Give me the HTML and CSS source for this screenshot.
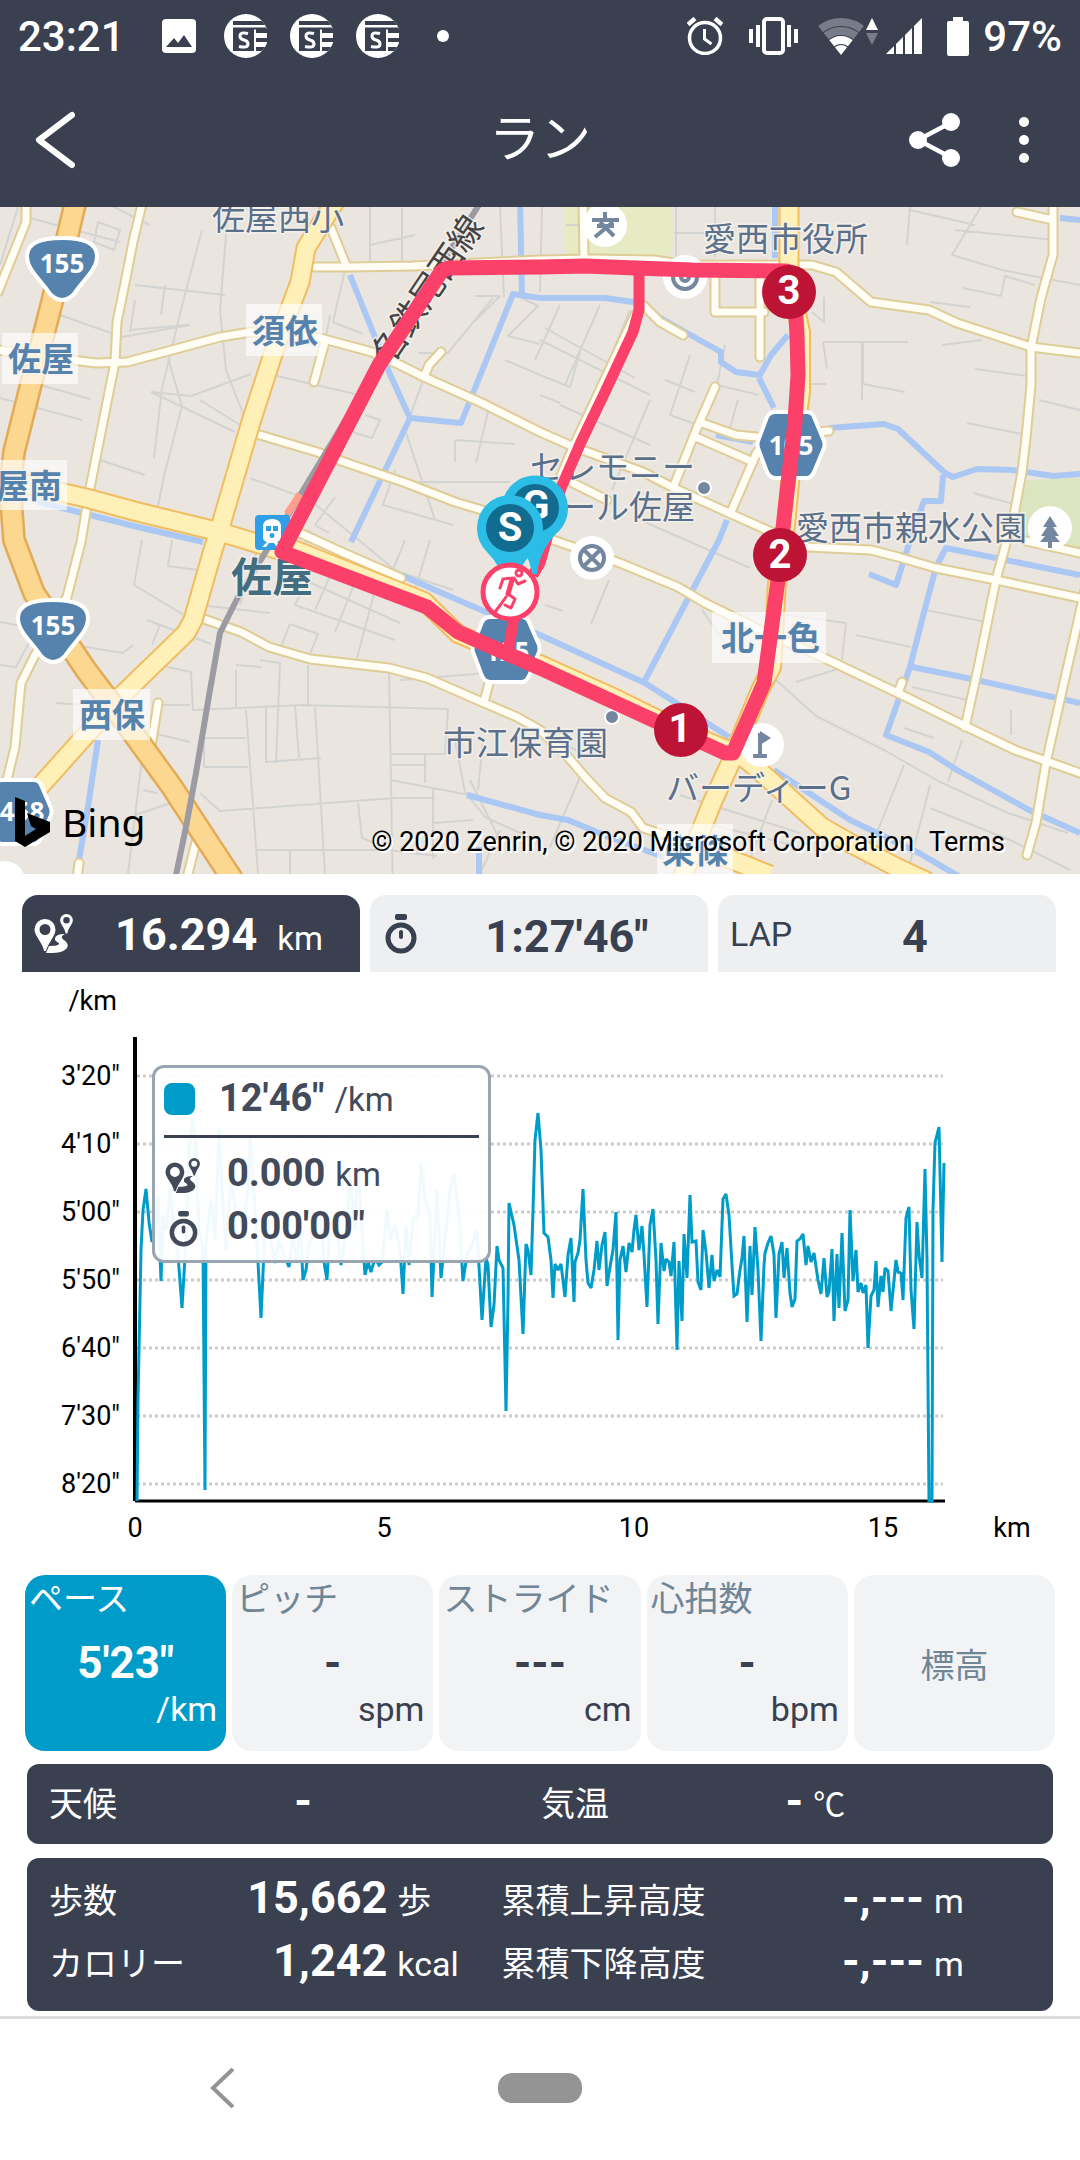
FILE: index.html
```
<!DOCTYPE html>
<html lang="ja">
<head>
<meta charset="utf-8">
<meta name="viewport" content="width=device-width, initial-scale=1">
<title>ラン</title>
<link rel="stylesheet" href="styles.css">
</head>
<body>
<svg class="defs" aria-hidden="true">
  <defs>
    <symbol id="i-route" viewBox="0 0 40 40">
      <path fill="currentColor" fill-rule="evenodd" d="M11 5a10.500 10.500 0 0 1 10.500 10.500C21.500 22 14 29 12 37h-2C9 29 .5 22 .5 15.500A10.500 10.500 0 0 1 11 5zm0 5a5.500 5.500 0 1 0 0 11 5.500 5.500 0 0 0 0-11z"/>
      <path fill="currentColor" fill-rule="evenodd" d="M32.500 0a6.300 6.300 0 0 1 6.300 6.300c0 4-4.300 7-5.500 13.200h-1.600C30.500 13.300 26.200 10.300 26.200 6.300A6.300 6.300 0 0 1 32.500 0zm0 3a3.300 3.300 0 1 0 0 6.600 3.300 3.300 0 0 0 0-6.600z"/>
      <path fill="currentColor" d="M12 39l3-7c6 0 10-1 10-2 0-2-4-2-4-5 0-4 5-5 10-5-4 2-4 4-1 6 4 3 5 6 2 9-4 4-10 4-20 4z"/>
    </symbol>
    <symbol id="i-watch" viewBox="0 0 32 40">
      <rect x="10" y="0" width="12" height="6" rx="2" fill="currentColor"/>
      <circle cx="16" cy="24" r="13" fill="none" stroke="currentColor" stroke-width="5"/>
      <rect x="14" y="16" width="4" height="9" rx="2" fill="currentColor"/>
    </symbol>
    <symbol id="i-news" viewBox="0 0 43 44">
      <clipPath id="disc"><circle cx="22" cy="22" r="22"/></clipPath>
      <g clip-path="url(#disc)">
        <rect width="44" height="44" fill="#fff"/>
        <path fill="#3a4050" d="M9 7h34v4H9zM32 15h12v4H32zM32 24h12v4H32zM32 33h12v4H32z"/>
        <path fill="none" stroke="#3a4050" stroke-width="2" d="M9 14.500h34"/>
        <rect x="9" y="15" width="21" height="22" fill="#3a4050"/>
      </g>
      <path fill="none" stroke="#fff" stroke-width="3" d="M24 19.500q-8-2-8 2.500 0 3 4 4t4 4q0 4.500-9 2.500"/>
    </symbol>
  </defs>
</svg>

<header class="head">
  <div class="status">
    <span class="clock">23:21</span>
    <svg class="s-photo" viewBox="0 0 34 34"><rect width="34" height="34" rx="4" fill="#fff"/><path fill="#3a4050" d="M4 28l8-9 4 5 6-8 8 12z"/></svg>
    <svg class="s-news"><use href="#i-news"/></svg>
    <svg class="s-news"><use href="#i-news"/></svg>
    <svg class="s-news"><use href="#i-news"/></svg>
    <i class="s-dot"></i>
    <div class="status-right">
      <svg class="s-alarm" viewBox="0 0 36 38" fill="none" stroke="#fff"><circle cx="18" cy="21" r="15.500" stroke-width="3.500"/><path stroke-width="3" d="M17.500 12v10l7 5"/><path stroke-width="4.500" d="M1 7.500l7-6M35 7.500l-7-6"/></svg>
      <svg class="s-vibe" viewBox="0 0 49 38"><rect x="15" y="2" width="19" height="34" rx="3" fill="none" stroke="#fff" stroke-width="4"/><path fill="#fff" d="M0 12h4v14H0zM7 8h4v22H7zM38 8h4v22h-4zM45 12h4v14h-4z"/></svg>
      <svg class="s-wifi" viewBox="0 0 60 38">
        <clipPath id="fan"><path d="M-3 5L23 38 49 5V-2H-3z"/></clipPath>
        <g clip-path="url(#fan)" fill="none"><circle cx="23" cy="38" r="33" stroke="#777c88" stroke-width="8"/><circle cx="23" cy="38" r="24" stroke="#777c88" stroke-width="8"/><circle cx="23" cy="38" r="15" stroke="#fff" stroke-width="8"/><circle cx="23" cy="38" r="10" fill="#fff"/></g>
        <path fill="#fff" d="M48 13l6-12 6 12z"/><path fill="#777c88" d="M48 16h12l-6 12z"/>
      </svg>
      <svg class="s-signal" viewBox="0 0 36 36"><path fill="#fff" d="M0 36L8 28v8zM10 36V26l7-7v17zM19 36V17l7-7v26zM28 36V8l8-8v36z"/></svg>
      <svg class="s-battery" viewBox="0 0 22 39"><path fill="#fff" d="M6 0h10v4h4q2 0 2 2v31q0 2-2 2H2q-2 0-2-2V6q0-2 2-2h4z"/></svg>
      <span class="percent">97%</span>
    </div>
  </div>
  <nav class="bar">
    <button class="icon-btn" aria-label="戻る"><svg class="b-back" viewBox="0 0 40 58"><path d="M37 4L4 29l33 25" fill="none" stroke="#fff" stroke-width="6" stroke-linecap="round" stroke-linejoin="round"/></svg></button>
    <h1>ラン</h1>
    <div class="bar-right">
      <button class="icon-btn" aria-label="共有"><svg class="b-share" viewBox="0 0 52 54"><path d="M43 9L9 27l34 18" fill="none" stroke="#fff" stroke-width="4.500"/><g fill="#fff"><circle cx="9" cy="27" r="9"/><circle cx="42" cy="9" r="9"/><circle cx="42" cy="45" r="9"/></g></svg></button>
      <button class="icon-btn" aria-label="メニュー"><svg class="b-more" viewBox="0 0 10 46" fill="#fff"><circle cx="5" cy="5" r="5"/><circle cx="5" cy="23" r="5"/><circle cx="5" cy="41" r="5"/></svg></button>
    </div>
  </nav>
</header>

<main>
<section class="map" aria-label="ルート地図">
<svg class="map-svg" viewBox="0 207 1080 667">
  <defs>
    <g id="lanes">
      <path d="M26 200v22L-2 292M143 200l-10 42-7 36-9 44-2 40-10 50-15 76-9 54-14 55-33 60-13 26-6 64-8 33"/>
      <path d="M-3 350l75 10 24 3 31-1 45-12 48-13 31-5 69 6 52 14 28 13 24 12 58 26 58 29 34 15 69 25 31 16 55 25 38 17 41 17 63 3 27 7 38 11 60 12 84 18"/>
      <path d="M325 342l-11 40M441 352l-12 13-5 12M331 228l15 37"/>
      <path d="M315 267h31l67-1 127-6 52-1 62 1 34 5h124l24 7 35 30 58 8 28 13 74 24 49 6"/>
      <path d="M260 435l57 17 27 10 62 21 49 19 27 8 71 30 67 23 58 24 27 16 55 27 62 27 80 38 65 32 48 23 65 23"/>
      <path d="M300 533l44 20 57 25M583 200l1 58M643 305l17 17 23 13M715 278v34h49M760 278v79M715 387l-18 41-24 60M702 423l34 12 21 2M698 438l55 24M757 452l-26 60M815 432l14-1"/>
      <path d="M635 315l-61 130-14 33M573 483l34 17"/>
      <path d="M1017 212l36 8M1053 200v55l-12 43-10 50v37l-5 53-4 34-8 43-9 32-9 33-19 93-12 54M1085 590l-22 97-17 76-10 60-9 32M902 682l-4 11M1026 541l54 12"/>
      <path d="M201 618l40 14 28 15 41 12 79 9 38 10 55 24 35 15 23 13 28 27 17 20 20 21 26 14 12 16 28 9M489 683l-5 19M158 703l-8 50M79 863l-2 16M196 842l-9 36"/>
    </g>
    <g id="mains">
      <path d="M336 200l-30 48-6 34-25 66-24 74-31 106-7 22-20 70-7 13-66 64-86 96-38 42"/>
      <path d="M20 483l66 15 52 14 82 20 59 18"/>
      <path d="M726 747l21 13 34 30 41 37 28 16 48 25 30 14M789 200v75M735 753l-23 50-32 80M715 853l55 22"/>
    </g>
    <g id="mids">
      <path d="M279 547l17 3 128 51 34 33 52 22 30 8 69 31 69 34 48 20"/>
      <path d="M794 300l7 32v60l-8 60-7 73-9 58-5 84-12 23-27 65"/>
    </g>
  </defs>
  <rect y="207" width="1080" height="667" fill="#eae5df"/>
  <path fill="#e6ebc3" d="M563 207h107q8 28-1 52H565z"/>
  <path fill="#dbe5c0" d="M1027 480l53-2v74l-75-22z"/>
  <g class="streets">
    <path d="M30 218l90 24M110 205l40 20M98 222l-4 20 20 8 6-20zM0 265l18-58M202 230l-18 68-22 90-8 70M228 210l-8 100 6 60 18 46v40M135 285l90 10M165 285l-4 30M135 300l-5 32M60 315l62 22 68-12M40 385l50 14M130 330l58-5M0 398l82 22M168 358l14 48-18 70-8 40M151 392l40 4 60-22M151 392l84 40M260 372l95 22M330 315l-10 55M370 205v56M402 208v56M345 270l-12 52 30 12M100 460l45 15M370 245l45-10M400 205l80-8M200 400l40 25"/>
    <path d="M500 207l4 90M542 207l-2 85M475 296h25l-25 25M513 294l25 12-30 30 32 8M505 360l35 15M418 353h30l45-55M365 415l15 5-8 18-20-6M425 375l-20 55 30 90M490 403l-14 60M455 440l60 4M455 440v22M250 478l60 22 85 70M310 530l-10 35M395 470l-12 35 70 20M400 482h110M335 497l-20 28 14 8"/>
    <path d="M676 207v55M715 207v50M580 225h-14M674 233h35M910 205l-3 40M910 210l65 15M982 205l-30 50 50 15 78 15M955 230l100 10M963 288l38 8 4-20 30 9M930 302l40 5M862 400v-58M823 342h85M863 342v42l42 8M823 342l4 27M975 369l52 7M967 423l60 12M1039 400l41 10M973 493l44 12M812 312l12 10v-25M942 345l40-5M801 384h25"/>
    <path d="M545 328l90 50M560 305l-25 55M600 305l-35 80M540 340l110 55M630 310l-45 110M540 375l30 12 10-35M690 355l-20 60 55 20M560 405l90 40M725 345l-8 40 42 10M738 400l-8 28 18 8M540 395l20 8M665 380l30 12M650 400l-38 90M640 520l110 48M750 452l30 15M545 605l18 6M609 580l-18 44M702 610l28 40M780 614l66 9-5 45-45 14M856 635l55 12M926 610l60 12M776 680l40 36 70 35 52 30 70 32 60 20M904 765l-40 100M930 785l-20 78M962 740l-14 42M912 687l55 13M904 728l30 10M930 808l80 32 60 30M680 795l120 38M772 800l-26 70M712 825l80 20M1011 710v25"/>
    <path d="M172 540l-4 26 30 4M142 540l-8 45 50 30M147 620l64 24M160 625l-8 20M75 645l48 8 10-8M0 622l26 5M0 665l16 2 14-26M260 540l-20 65M200 605l70 8M315 565l-20 40 100 35M335 565l-20 45M355 582l-20 50M375 590l-18 68M300 578l100 45M405 540l-12 30 60 20M430 540l-15 50M260 660l20 3-4 100M236 665l25 2M236 670v37M308 665v42M389 668l4 230M290 624l-10 25M290 624l28 10-10 25M193 710l110-5 145 4-3 45h-55M190 705h-35M56 703l45 3M167 667l24 5 2 39M204 738h42M204 767h44M204 738v29M246 710l12 164M266 705v57l55-4M295 705l4 53M315 707l10 167M200 793l20 18 175-13h40M143 790l14 3M135 815l60-20M140 730l50 12M144 742l-16 132M257 850h130l50 6M290 850v24M358 803l4 35 25 10M390 780l80 15M433 787v72M470 780l30 60M425 753v30M455 740l10 52 20 25 55 25M483 740l-5 50M390 765h37M433 823l40-3M400 680l100-8M500 830l-20 44M556 740l20 10M580 777l-30 70"/>
  </g>
  <g class="water">
    <path d="M520 200l2 95M540 298l-27-4-52 129-51-5-59 124M410 418l-21-46-39-97M540 298h65l28 4 45 26 43 24v10l15 10 24 3 11-20 17-20M759 378l15 30M775 200v58"/>
    <path d="M829 428l55-4 14 5 47 44 8 4 24-8 35 1 41 6 27-2M943 475l-2 26h-17l-16 46-12 38-27-11M1080 575l-134-27-10 19-14 53-12 47-14 40-10 28 43 17 28 18 72 40 51 23M912 667l55 11 113 25"/>
    <path d="M401 575l57 25 82 35 105 48 84 54M645 680l74-140 8-20M774 770l76 50 69 33 41 24M467 795l73 20 28 5 41 17 55 20M479 847v27M98 740l-10 67-9 53M38 502l100 25 65 15M1060 218l20 2M716 435l37 7"/>
  </g>
  <use href="#lanes" class="lane-edge"/><use href="#lanes" class="lane"/>
  <use href="#mids" class="mid-edge"/><use href="#mids" class="mid"/>
  <use href="#mains" class="main-edge"/><use href="#mains" class="main-road"/>
  <path class="hwy-edge" d="M76 200L52 302 29 392 14 452 10 488l4 52 20 53 52 77 28 37 58 80 28 43 33 50"/>
  <path class="hwy" d="M76 200L52 302 29 392 14 452 10 488l4 52 20 53 52 77 28 37 58 80 28 43 33 50"/>
  <path class="rail" d="M482 200l-93 148-93 154-31 51-27 44-18 36-10 57-14 83-10 54-11 53"/>
  <path d="M300 494l-13 20" stroke="#ff9e8a" stroke-width="7"/>

  <g fill="#fff" fill-opacity=".65"><rect x="246" y="304" width="76" height="52"/><rect x="2" y="333" width="76" height="51"/><rect x="-8" y="460" width="75" height="50"/><rect x="73" y="689" width="77" height="51"/><rect x="712" y="612" width="114" height="51"/><rect x="657" y="824" width="76" height="50"/></g>
  <g class="town"><text x="252" y="343">須依</text><text x="8" y="371">佐屋</text><text x="-4" y="498">屋南</text><text x="79" y="727">西保</text><text x="721" y="650">北一色</text><text x="662" y="863">東條</text></g>
  <text class="station" x="231" y="592">佐屋</text>
  <text class="line-name" transform="translate(390 367) rotate(-56)">名鉄尾西線</text>

  <g><rect x="255" y="515" width="35" height="35" rx="4" fill="#2f9fe9"/><path fill="#fff" fill-rule="evenodd" d="M272 519q9 0 9 8v10q0 4-4 5l4 5h-4l-3-4h-5l-3 4h-4l5-5q-4-1-4-5v-10q0-8 9-8zm-6 7v5h5v-5zm7 0v5h5v-5zm-1 7a2.500 2.500 0 1 0 0 5 2.500 2.500 0 0 0 0-5z"/></g>
  <g fill="#fff"><circle cx="605" cy="225" r="22"/><circle cx="685" cy="277" r="22"/><circle cx="1050" cy="528" r="22"/><circle cx="592" cy="558" r="22"/><circle cx="762" cy="745" r="22"/><circle cx="5" cy="881" r="20"/></g>
  <g class="glyph"><path d="M592 220h27M597 226h17M605 212v10M600 222l14 14M613 222l-18 15"/><circle cx="685" cy="277" r="12"/><circle cx="685" cy="277" r="4"/><circle cx="592" cy="558" r="12"/><path d="M584 550l16 16M600 550l-16 16M753 756h14M760 756v-23"/></g>
  <path fill="#7587a0" d="M760 731l11 7-11 7zM1050 516l7 11h-4l6 9h-4l5 6h-8v6h-4v-6h-8l5-6h-4l6-9h-4z"/>
  <circle class="spot" cx="704" cy="488" r="7"/><circle class="spot" cx="612" cy="717" r="7"/>
  <g class="poi"><text x="212" y="230">佐屋西小</text><text x="703" y="251">愛西市役所</text><text x="530" y="479">セレモニー</text><text x="563" y="519">ール佐屋</text><text x="796" y="540">愛西市親水公園</text><text x="443" y="755">市江保育園</text><text x="666" y="800">バーディーG</text></g>

  <g class="shield">
    <path d="M62 238c24 0 35 6 35 18 0 14-14 24-23 38q-12 12-24 0c-9-14-23-24-23-38 0-12 11-18 35-18z"/>
    <path d="M53 600c24 0 35 6 35 18 0 14-14 24-23 38q-12 12-24 0c-9-14-23-24-23-38 0-12 11-18 35-18z"/>
    <path d="M775 412h32q5 0 7 5l10 24q1 4 0 7l-10 24q-3 6-7 6h-32q-5 0-8-6l-9-24q-1-3 0-7l9-24q3-5 8-5z"/>
    <path d="M490 617h32q5 0 7 5l10 23q1 4 0 7l-10 24q-3 6-7 6h-32q-5 0-8-6l-9-24q-1-3 0-7l9-23q3-5 8-5z"/>
    <path d="M2 780h32q5 0 7 5l10 23q1 4 0 7l-10 23q-3 6-7 6H2q-5 0-8-6l-9-23q-1-3 0-7l9-23q3-5 8-5z"/>
    <text x="62" y="273">155</text><text x="53" y="635">155</text><text x="791" y="455">105</text><text x="507" y="661">125</text><text x="22" y="821">458</text>
  </g>

  <path class="run" d="M282 552l97-187 62-93q3-3 9-4l90-1 45-1 51 2 56 2 93 1q8 0 9 10l3 54 1 40-3 47-12 106-5 52-14 103-31 70h-8L605 698l-65-30-30-13-52-23-31-25z"/>
  <path class="run branch" d="M639 270v40l-6 22-28 60-24 50-20 46-21 75-7 12M515 610l-2 13-5 30"/>

  <path fill="#2cbde6" d="M502 508a33 33 0 1 1 58 22q-20 18-23 44h-5q-4-25-22-44z"/>
  <circle cx="535" cy="508" r="24" fill="#116c90"/><text class="pin" x="536" y="519">G</text>
  <path fill="#2cbde6" d="M477 528a33 33 0 1 1 66 0q0 14-10 24-16 16-20 38h-6q-4-22-20-38-10-10-10-24z"/>
  <circle cx="510" cy="528" r="24" fill="#116c90"/><text class="pin" x="510" y="541">S</text>
  <circle cx="510" cy="592" r="27" fill="#fff" stroke="#fb4169" stroke-width="5"/>
  <g fill="none" stroke="#fb4169" stroke-width="3" stroke-linecap="round" stroke-linejoin="round"><circle cx="519" cy="573" r="3"/><path stroke-width="5" d="M512 580l-4 14"/><path d="M500 588l3-9 11-1 4 6 7-3M508 594l7 5-4 9-6-3M506 597l-5 7-6 8"/></g>
  <g fill="#bd1436"><circle cx="789" cy="292" r="27"/><circle cx="780" cy="555" r="27"/><circle cx="681" cy="730" r="27"/></g>
  <g class="pin"><text x="789" y="304">3</text><text x="780" y="568">2</text><text x="680" y="742">1</text></g>
  <path d="M15 797l10 4v35l11-7-5-3-4-13 23 9v10l-25 15-10-6z"/>
  <text class="bing" x="62" y="837">Bing</text>
</svg>
<p class="credit">© 2020 Zenrin, © 2020 Microsoft Corporation<a href="#terms">Terms</a></p>
</section>

<div class="tabs" role="tablist">
  <button class="tab on" role="tab" aria-selected="true"><svg class="t-route"><use href="#i-route"/></svg><span class="t-val">16.294<small>km</small></span></button>
  <button class="tab" role="tab" aria-selected="false"><svg class="t-watch"><use href="#i-watch"/></svg><span class="t-val">1:27'46"</span></button>
  <button class="tab" role="tab" aria-selected="false"><span class="t-lap">LAP</span><span class="t-val">4</span></button>
</div>

<section class="chart" aria-label="ペースのグラフ">
<svg class="chart-svg" viewBox="0 972 1080 603">
  <path class="grid" d="M137 1076h806M137 1144h806M137 1212h806M137 1280h806M137 1348h806M137 1416h806M137 1484h806"/>
  <path d="M135 1501h810" stroke="#000" stroke-width="3"/>
  <path d="M135 1037v464" stroke="#000" stroke-width="4"/>
  <polyline class="pace" points="137,1501 138,1400 141,1250 143,1210 146,1189 149,1222 152,1242 155,1235 158,1195 161,1281 163,1215 166,1230 170,1190 174,1225 178,1255 182,1308 186,1240 189,1150 193,1118 196,1150 199,1230 203,1250 205,1490 206,1240 211,1200 215,1240 219,1128 222,1190 226,1250 231,1180 236,1210 243,1225 248,1190 250,1135 254,1195 258,1262 261,1318 264,1250 266,1215 270,1235 275,1263 279,1240 284,1255 289,1267 293,1235 297,1262 300,1220 303,1280 306,1270 309,1245 315,1225 320,1210 324,1262 327,1280 330,1225 336,1220 341,1265 347,1225 350,1175 355,1230 358,1165 361,1215 365,1275 368,1262 371,1272 375,1258 379,1265 382,1262 387,1210 390,1240 395,1225 400,1250 403,1294 406,1225 409,1265 413,1220 418,1215 421,1162 425,1200 430,1215 432,1297 437,1190 441,1278 446,1230 450,1190 454,1174 459,1215 463,1281 467,1255 472,1245 477,1230 482,1320 486,1258 488,1265 491,1327 494,1305 497,1246 499,1260 503,1268 506,1411 508,1300 509,1203 514,1225 519,1260 523,1334 526,1244 528,1250 531,1275 533,1210 535,1140 538,1113 541,1150 544,1233 548,1237 551,1260 553,1298 555,1264 558,1270 561,1264 565,1297 568,1255 571,1238 574,1302 575,1262 578,1253 580,1240 583,1189 586,1260 588,1283 591,1288 594,1270 597,1241 599,1270 602,1245 605,1232 607,1286 610,1267 613,1250 616,1212 618,1340 620,1260 623,1246 626,1272 629,1243 632,1252 634,1230 636,1215 639,1250 642,1226 644,1255 647,1307 650,1225 653,1209 656,1260 658,1324 661,1243 664,1271 666,1259 669,1262 671,1276 674,1242 677,1350 679,1261 682,1321 684,1234 687,1278 690,1195 692,1242 696,1241 698,1282 701,1290 703,1230 706,1252 709,1288 712,1255 714,1281 717,1270 720,1277 723,1199 726,1194 729,1215 732,1265 734,1296 737,1294 740,1270 742,1258 744,1236 747,1322 750,1246 752,1295 755,1227 758,1270 761,1341 764,1265 765,1253 768,1243 771,1236 774,1255 776,1318 779,1254 782,1242 784,1278 787,1248 790,1293 792,1307 795,1299 797,1241 800,1239 803,1234 806,1265 808,1246 811,1262 814,1253 818,1280 821,1294 824,1258 827,1297 829,1292 832,1249 834,1321 837,1254 839,1308 842,1233 845,1311 848,1300 850,1210 853,1281 856,1250 858,1292 861,1283 863,1293 866,1285 868,1348 871,1296 874,1290 876,1261 878,1307 881,1276 883,1292 885,1268 888,1271 891,1311 896,1260 898,1272 901,1273 903,1300 906,1218 909,1207 911,1290 914,1329 917,1222 919,1255 922,1278 925,1169 927,1260 929,1501 932,1501 933,1210 935,1143 939,1127 942,1262 944,1163"/>
  <g class="axis end"><text x="117" y="1010">/km</text><text x="120" y="1085">3'20"</text><text x="120" y="1153">4'10"</text><text x="120" y="1221">5'00"</text><text x="120" y="1289">5'50"</text><text x="120" y="1357">6'40"</text><text x="120" y="1425">7'30"</text><text x="120" y="1493">8'20"</text></g>
  <g class="axis mid-anchor"><text x="135" y="1537">0</text><text x="384" y="1537">5</text><text x="634" y="1537">10</text><text x="883" y="1537">15</text><text x="1012" y="1537">km</text></g>
</svg>
<div class="tip">
  <div class="tip-head"><i></i><b>12'46"</b><span>/km</span></div>
  <div class="tip-row"><svg class="r"><use href="#i-route"/></svg><b>0.000</b><span>km</span></div>
  <div class="tip-row"><svg class="w"><use href="#i-watch"/></svg><b>0:00'00"</b></div>
</div>
</section>

<div class="cards">
  <button class="card on"><span class="c-name">ペース</span><span class="c-val">5'23"</span><span class="c-unit">/km</span></button>
  <button class="card"><span class="c-name">ピッチ</span><span class="c-val">-</span><span class="c-unit">spm</span></button>
  <button class="card"><span class="c-name">ストライド</span><span class="c-val">---</span><span class="c-unit">cm</span></button>
  <button class="card"><span class="c-name">心拍数</span><span class="c-val">-</span><span class="c-unit">bpm</span></button>
  <button class="card solo"><span class="c-name">標高</span></button>
</div>

<div class="panel weather"><span>天候</span><b>-</b><span>気温</span><div><b>-</b><span>℃</span></div></div>
<div class="panel totals">
  <span>歩数</span><b>15,662</b><em>歩</em><span>累積上昇高度</span><b>-,---</b><em>m</em>
  <span>カロリー</span><b>1,242</b><em>kcal</em><span>累積下降高度</span><b>-,---</b><em>m</em>
</div>
</main>

<footer class="nav">
  <button class="icon-btn" aria-label="戻る"><svg class="n-back" viewBox="0 0 25 42"><path d="M23 2L3 21l20 19" fill="none" stroke="#949494" stroke-width="4"/></svg></button>
  <button class="home" aria-label="ホーム"></button>
  <span></span>
</footer>
</body>
</html>
```
FILE: styles.css
```
* { box-sizing: border-box; }
body { margin: 0; background: #fff; color: #394050; font-family: Roboto, "Noto Sans CJK JP", sans-serif; }
button { border: 0; padding: 0; margin: 0; background: none; font: inherit; color: inherit; }
svg { display: block; flex: none; }
.defs { position: absolute; width: 0; height: 0; }
b { font-weight: 700; }
em { font-style: normal; }

.head { background: #3a4050; color: #fff; }
.status { display: flex; align-items: center; height: 72px; padding: 0 18px; font-size: 42px; line-height: 48px; }
.status span { padding-top: 2px; }
.clock { font-weight: 500; width: 144px; }
.percent { font-weight: 500; margin-left: 14px; }
.s-photo { width: 34px; height: 34px; margin-right: 28px; }
.s-news { width: 43px; height: 44px; margin-right: 23px; }
.s-dot { width: 12px; height: 12px; margin-left: 15px; border-radius: 50%; background: #fff; }
.status-right { display: flex; align-items: center; margin-left: auto; }
.s-alarm { width: 36px; height: 38px; margin-right: 26px; }
.s-vibe { width: 49px; height: 38px; margin-right: 20px; }
.s-wifi { width: 60px; height: 38px; margin-right: 8px; }
.s-signal { width: 36px; height: 36px; margin-right: 25px; }
.s-battery { width: 22px; height: 39px; }

.bar { display: grid; grid-template-columns: 1fr auto 1fr; align-items: center; height: 135px; padding: 0 51px 0 35px; }
.bar h1 { margin: 0; padding-left: 16px; font-size: 51px; line-height: 64px; font-weight: 400; }
.bar-right { display: flex; justify-content: flex-end; align-items: center; gap: 58px; }
.b-back { width: 40px; height: 58px; }
.b-share { width: 52px; height: 54px; }
.b-more { width: 10px; height: 46px; }

.map { position: relative; overflow: hidden; }
.map-svg, .chart-svg { width: 100%; height: auto; }
.map-svg path, .map-svg use { stroke-linejoin: round; }
.streets { fill: none; stroke: #d3d4d2; stroke-width: 2; }
.water { fill: none; stroke: #abc7f4; stroke-width: 6; }
.lane-edge, .lane, .mid-edge, .mid { fill: none; stroke-linecap: round; }
.main-edge, .main-road, .hwy-edge, .hwy { fill: none; }
.lane-edge { stroke: #dfcd97; stroke-width: 11; }
.lane { stroke: #fffdf4; stroke-width: 7; }
.mid-edge { stroke: #f1bd60; stroke-width: 20; }
.mid { stroke: #fff0b8; stroke-width: 16; }
.main-edge { stroke: #f1bd60; stroke-width: 21; }
.main-road { stroke: #fff0b8; stroke-width: 17; }
.hwy-edge { stroke: #e3ab55; stroke-width: 24; }
.hwy { stroke: #fbd78f; stroke-width: 19; }
.rail { fill: none; stroke: #9c9ba4; stroke-width: 6; }
.map-svg text { font-family: "Noto Sans CJK JP", sans-serif; font-size: 33px; }
.poi, .town, .station, .line-name { paint-order: stroke; stroke: #f6f3ee; stroke-opacity: .8; stroke-width: 3px; }
.poi { fill: #5b708b; }
.town { fill: #5583ad; font-weight: 700; }
.map-svg .station { fill: #436d80; font-weight: 700; font-size: 41px; }
.map-svg .line-name { fill: #444; font-size: 34px; }
.glyph { fill: none; stroke: #7587a0; stroke-width: 4; }
.spot { fill: #7587a0; stroke: #fff; stroke-width: 2; }
.shield path { fill: #5583ad; stroke: #fff; stroke-width: 4; }
.map-svg .shield text { fill: #fff; font-family: "Noto Sans", sans-serif; font-size: 26px; font-weight: 700; text-anchor: middle; }
.map-svg .run { fill: none; stroke: #fb4169; stroke-width: 15; }
.map-svg .branch { stroke-width: 11; }
.map-svg .pin, .map-svg .pin text { fill: #fff; font-family: Roboto, sans-serif; font-size: 40px; font-weight: 700; text-anchor: middle; }
.map-svg .bing { font-family: "Noto Sans", sans-serif; font-size: 39px; font-weight: 400; }
.credit { position: absolute; right: 75px; bottom: 14px; margin: 0; display: flex; gap: 15px; font-size: 27px; line-height: 36px; color: #000; text-shadow: 2px 2px 0 #fff; white-space: nowrap; }
.credit a { color: inherit; text-decoration: none; }

.tabs { display: grid; grid-template-columns: repeat(3, 1fr); gap: 10px; padding: 21px 24px 0 22px; }
.tab { display: grid; grid-template-columns: 44px 1fr; align-items: center; height: 77px; padding: 0 0 0 12px; border-radius: 16px 16px 0 0; background: #eeeff1; }
.tab.on { background: #3a4050; color: #fff; }
.t-route { width: 40px; height: 40px; }
.t-watch { width: 32px; height: 40px; margin-left: 3px; }
.t-lap { font-size: 34px; line-height: 40px; }
.t-val { display: flex; justify-content: center; align-items: baseline; gap: 20px; padding-top: 6px; font-size: 45px; line-height: 52px; font-weight: 700; }
.t-val small { font-size: 33px; font-weight: 400; }

.chart { position: relative; }
.grid { fill: none; stroke: #ccc; stroke-width: 3; stroke-dasharray: 3 3; }
.pace { fill: none; stroke: #009cc9; stroke-width: 3; stroke-linejoin: miter; stroke-miterlimit: 2; }
.axis { font-size: 27px; fill: #000; }
.axis.end { text-anchor: end; }
.axis.mid-anchor { text-anchor: middle; }
.tip { position: absolute; left: 152px; top: 93px; width: 339px; height: 198px; padding: 9px; border: 3px solid #99a6b2; border-radius: 12px; background: rgba(255, 255, 255, .94); font-size: 33px; line-height: 42px; color: #434a5a; }
.tip b { font-size: 38px; }
.tip-head { display: flex; align-items: baseline; height: 61px; border-bottom: 3px solid #394050; margin-bottom: 14px; }
.tip-head i { align-self: flex-start; width: 31px; height: 32px; margin: 6px 24px 0 0; border-radius: 8px; background: #009cc9; }
.tip-head b, .tip-row b { margin-right: 10px; }
.tip-row { display: flex; align-items: baseline; height: 53px; }
.tip-row svg { align-self: flex-start; margin-top: 6px; }
.tip-row .r { width: 36px; height: 36px; margin-right: 26px; margin-left: 1px; }
.tip-row .w { width: 29px; height: 36px; margin: 6px 29px 0 5px; }

.cards { display: grid; grid-template-columns: repeat(5, 1fr); gap: 6px; padding: 0 25px; }
.card { display: flex; flex-direction: column; height: 176px; padding: 0 9px 0 4px; border-radius: 20px; background: #f2f3f5; }
.card.on { background: #009cc9; color: #fff; }
.c-name { align-self: flex-start; font-size: 34px; line-height: 48px; color: #708595; white-space: nowrap; }
.card.on .c-name { color: #fff; }
.c-val { align-self: stretch; padding-left: 5px; margin-top: 14px; font-size: 44px; line-height: 52px; font-weight: 700; }
.c-unit { align-self: flex-end; font-size: 34px; line-height: 40px; }
.card.solo { padding: 6px 0 0; justify-content: center; }
.card.solo .c-name { align-self: center; }

.panel { display: grid; align-items: baseline; margin: 13px 27px 0; padding: 0 22px; border-radius: 12px; background: #3a4050; color: #fff; font-size: 34px; line-height: 48px; white-space: nowrap; }
.panel b { font-size: 45px; }
.weather { grid-template-columns: 157fr 334fr 200fr 289fr; height: 80px; align-content: center; padding-bottom: 2px; }
.weather > b { padding-left: 88px; }
.weather div { display: flex; gap: 10px; align-items: baseline; padding-left: 44px; }
.weather div span { font-size: 32px; }
.totals { grid-template-columns: 151fr 187fr 114fr 249fr 173fr 107fr; height: 153px; margin-top: 14px; padding-top: 14px; align-content: start; grid-auto-rows: 63px; }
.totals b { text-align: right; line-height: 52px; }
.totals em { padding-left: 10px; }

.nav { display: grid; grid-template-columns: 1fr auto 1fr; align-items: center; height: 144px; margin-top: 5px; padding: 0 40px 4px; border-top: 3px solid #dcdcdc; }
.nav .icon-btn { justify-self: start; margin-left: 170px; }
.n-back { width: 25px; height: 42px; }
.home { width: 84px; height: 30px; border-radius: 14px; background: #949494; }
```
